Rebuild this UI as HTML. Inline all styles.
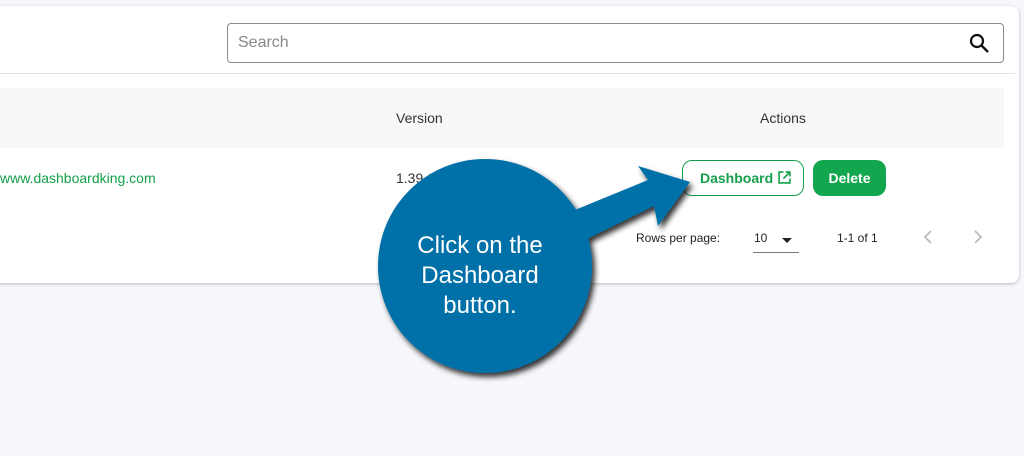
<!DOCTYPE html>
<html><head><style>
body{margin:0;width:1024px;height:456px;background:#f6f7fb;font-family:"Liberation Sans",sans-serif;position:relative;overflow:hidden}
.card{position:absolute;left:-10px;top:6px;width:1029px;height:277px;background:#fff;border-radius:8px;box-shadow:0 1px 3px rgba(0,0,0,.25)}
.a{position:absolute}
</style></head><body>
<div class="card"></div>
<div class="a" style="left:227px;top:23px;width:775px;height:38px;border:1px solid #8a8a8a;border-radius:4px"></div>
<div class="a" style="left:238px;top:34px;font-size:16px;color:#888">Search</div>
<svg class="a" style="left:968px;top:32px" width="22" height="22" viewBox="0 0 22 22"><circle cx="9" cy="9" r="6" fill="none" stroke="#111" stroke-width="2.2"/><path d="M13.5 13.5L20 20" stroke="#111" stroke-width="2.4"/></svg>
<div class="a" style="left:0;top:73px;width:1015px;height:1px;background:#e3e3e3"></div>
<div class="a" style="left:0;top:88px;width:1004px;height:60px;background:#f7f7f7"></div>
<div class="a" style="left:396px;top:110px;font-size:14px;color:#333">Version</div>
<div class="a" style="left:760px;top:110px;font-size:14px;color:#333">Actions</div>
<div class="a" style="left:0;top:170px;font-size:14px;color:#14a04a">www.dashboardking.com</div>
<div class="a" style="left:396px;top:170px;font-size:14px;color:#333">1.39.1</div>
<div class="a" style="left:682px;top:160px;width:122px;height:36px;border:1px solid #14a04a;border-radius:10px;box-sizing:border-box;color:#14a04a;font-size:14px;font-weight:bold;line-height:34px;padding-left:17px">Dashboard <svg width="13" height="13" viewBox="0 0 12 12" style="vertical-align:-1px;margin-left:1px"><path d="M5 1H1v10h10V7M7 1h4v4M11 1L5 7" fill="none" stroke="#14a04a" stroke-width="1.5"/></svg></div>
<div class="a" style="left:813px;top:160px;width:73px;height:36px;background:#12a64f;border-radius:10px;color:#fff;font-size:14px;font-weight:bold;text-align:center;line-height:36px">Delete</div>
<div class="a" style="left:636px;top:231px;font-size:12px;color:#222">Rows per page:</div>
<div class="a" style="left:754px;top:231px;font-size:12px;color:#222">10</div>
<div class="a" style="left:782px;top:238px;border:5px solid transparent;border-top:5px solid #222;border-bottom:0"></div>
<div class="a" style="left:753px;top:252px;width:46px;height:1px;background:#777"></div>
<div class="a" style="left:837px;top:231px;font-size:12px;color:#222">1-1 of 1</div>
<svg class="a" style="left:920px;top:229px" width="70" height="16"><path d="M11 2L5 8l6 6" fill="none" stroke="#bbb" stroke-width="1.8"/><path d="M55 2l6 6-6 6" fill="none" stroke="#bbb" stroke-width="1.8"/></svg>
<svg class="a" style="left:0;top:0" width="1024" height="456">
<defs><filter id="s" x="-20%" y="-20%" width="140%" height="140%"><feGaussianBlur in="SourceAlpha" stdDeviation="3"/><feOffset dx="3" dy="4"/><feComponentTransfer><feFuncA type="linear" slope="0.8"/></feComponentTransfer><feMerge><feMergeNode/><feMergeNode in="SourceGraphic"/></feMerge></filter></defs>
<g filter="url(#s)" fill="#0570a8">
<polygon points="570,212 648,180 638,166 690,182 658,226 654,206 585,240"/>
<circle cx="485" cy="266" r="107"/>
</g>
<text x="480" y="253" fill="#fff" font-size="24" text-anchor="middle" font-family="Liberation Sans">Click on the</text>
<text x="480" y="283" fill="#fff" font-size="24" text-anchor="middle" font-family="Liberation Sans">Dashboard</text>
<text x="480" y="313" fill="#fff" font-size="24" text-anchor="middle" font-family="Liberation Sans">button.</text>
</svg>
</body></html>
